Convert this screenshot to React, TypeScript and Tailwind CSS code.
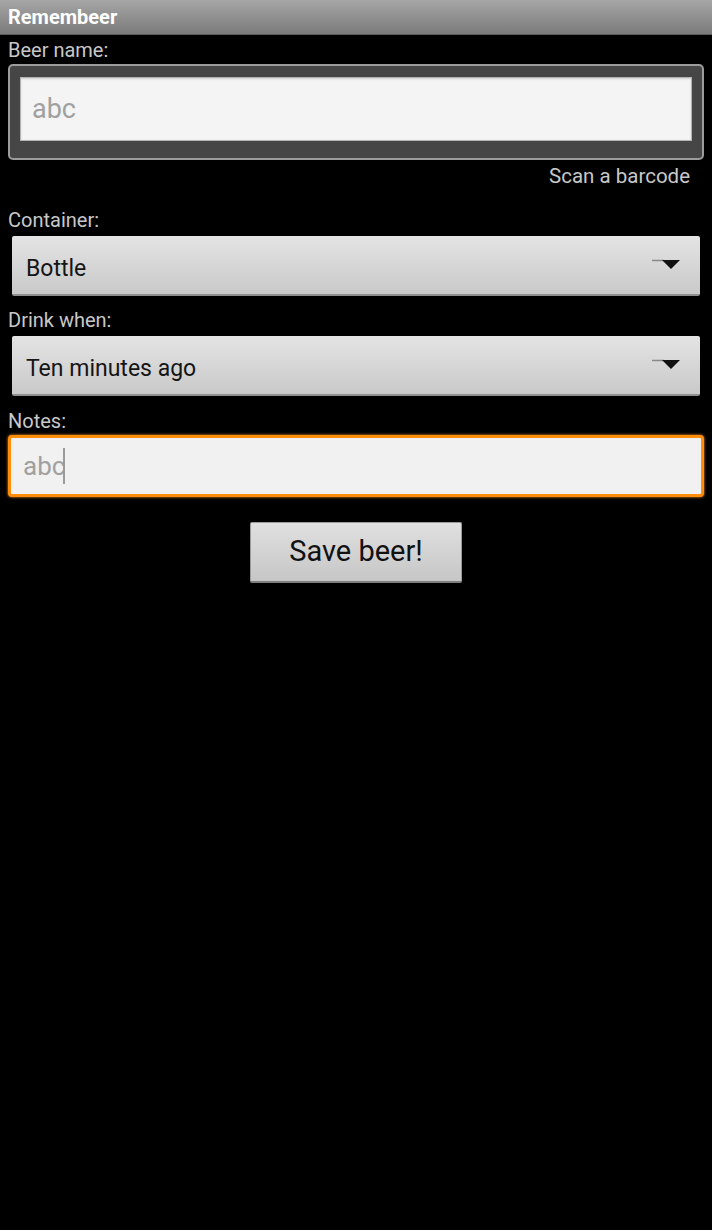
import React from "react";

const FONT = { fontFamily: "Roboto, 'Noto Sans', Arial, sans-serif" };

function Arrow() {
  return (
    <svg width="30" height="12" viewBox="0 0 30 12" className="shrink-0">
      <line x1="0" y1="1.5" x2="12" y2="1.5" stroke="#8a8a8a" strokeWidth="1.5" />
      <polygon points="10,1 28,1 19,10" fill="#111" />
    </svg>
  );
}

function Spinner({ value }: { value: string }) {
  return (
    <div className="mx-1 h-[60px] flex items-center justify-between pl-[14px] pr-[18px] bg-gradient-to-b from-[#e4e4e4] to-[#c9c9c9] border-b-2 border-[#8f8f8f] rounded-[2px]">
      <span className="text-[23px] leading-[28px] pt-[7px] text-[#151515]">{value}</span>
      <Arrow />
    </div>
  );
}

function Label({ text, h, pb }: { text: string; h: string; pb: string }) {
  return (
    <div className={`flex items-end ${h} ${pb}`}>
      <span className="text-[20px] leading-[24px] text-[#c8c8c8]">{text}</span>
    </div>
  );
}

export default function App() {
  return (
    <div className="w-[712px] h-[1230px] bg-black overflow-hidden" style={FONT}>
      {/* Action bar */}
      <div className="h-[35px] flex items-center px-2 bg-gradient-to-b from-[#a6a6a6] to-[#7b7b7b] border-b border-[#5c5c5c]">
        <span className="text-[20px] font-bold text-white">Remembeer</span>
      </div>

      <div className="px-2 flex flex-col">
        <Label text="Beer name:" h="h-[29px]" pb="pb-[2px]" />

        {/* Beer name box */}
        <div className="h-[96px] border-2 border-[#9c9c9c] rounded-[5px] bg-[#464646] pt-[11px] pb-[17px] px-[10px]">
          <div className="h-full bg-[#f4f4f4] border border-[#b4b4b4] flex items-center pl-[11px] shadow-[inset_0_1px_2px_rgba(0,0,0,0.15)]">
            <span className="text-[27px] text-[#a0a0a0]">abc</span>
          </div>
        </div>

        <div className="h-[30px] flex items-center justify-end pr-[14px]">
          <span className="text-[20.5px] leading-[24px] pt-[2px] text-[#c8c8c8]">Scan a barcode</span>
        </div>

        <Label text="Container:" h="h-[46px]" pb="pb-[4px]" />
        <Spinner value="Bottle" />

        <Label text="Drink when:" h="h-[40px]" pb="pb-[4px]" />
        <Spinner value="Ten minutes ago" />

        <Label text="Notes:" h="h-[39px]" pb="pb-[2px]" />

        {/* Notes input, focused */}
        <div className="h-[62px] border-[3px] border-[#ff8d0a] rounded-[4px] bg-[#f1f1f1] flex items-center pl-[12px] shadow-[0_0_3px_#ff9a2a]">
          <span className="text-[26px] text-[#a0a0a0]">abc</span>
          <span className="w-[2px] h-[36px] bg-[#9a9a9a] -ml-[2px]" />
        </div>

        <div className="flex justify-center pt-[25px]">
          <button className="w-[212px] h-[61px] bg-gradient-to-b from-[#e0e0e0] to-[#c6c6c6] border border-[#9a9a9a] border-b-2 border-b-[#7f7f7f] rounded-[2px] text-[29px] text-[#111]">
            Save beer!
          </button>
        </div>
      </div>
    </div>
  );
}
